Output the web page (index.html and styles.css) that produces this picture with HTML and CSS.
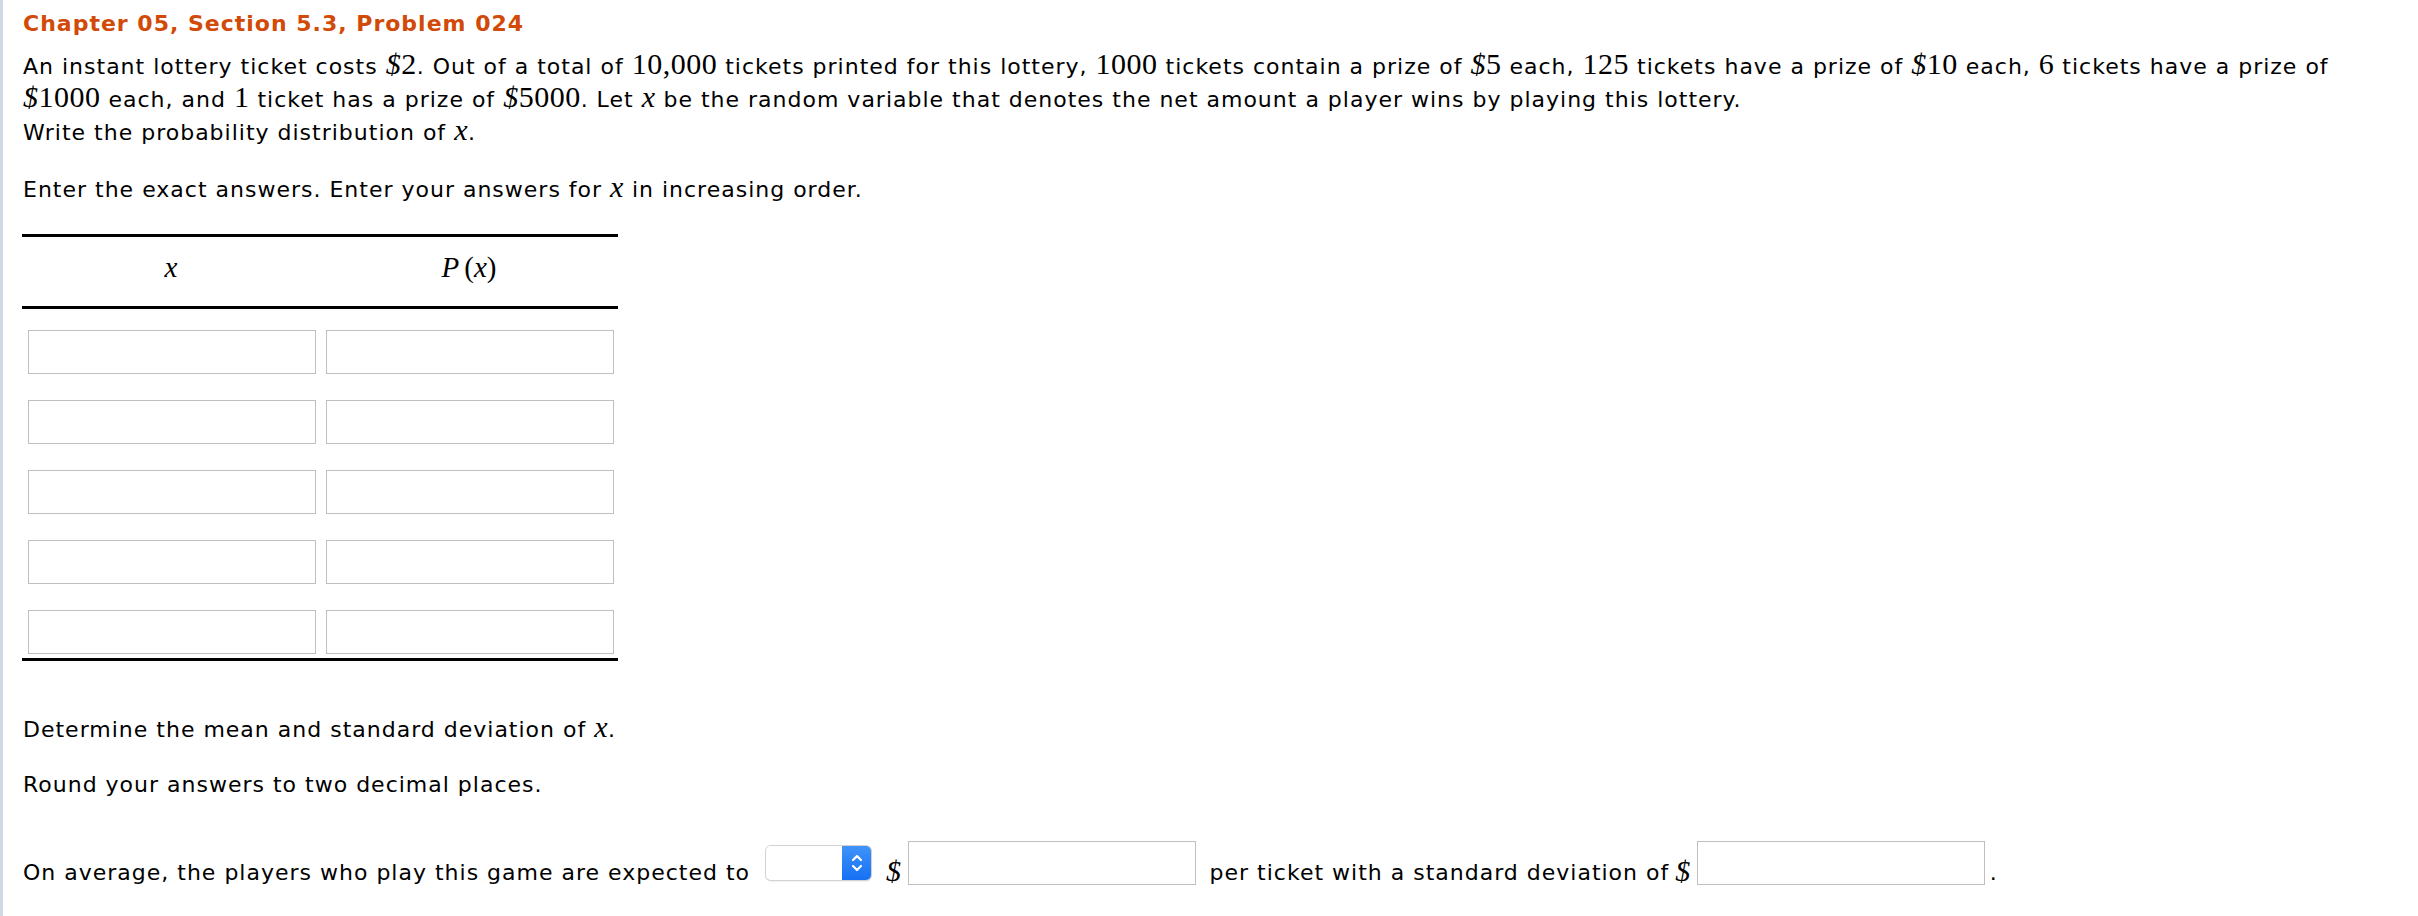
FILE: index.html
```html
<!DOCTYPE html>
<html lang="en">
<head>
<meta charset="utf-8">
<title>Chapter 05, Section 5.3, Problem 024</title>
<link rel="stylesheet" href="styles.css">
</head>
<body>
<div class="page">
  <h1 class="title">Chapter 05, Section 5.3, Problem 024</h1>
  <p class="para">An instant lottery ticket costs <span class="m"><i>$</i>2</span>. Out of a total of <span class="m">10,000</span> tickets printed for this lottery, <span class="m">1000</span> tickets contain a prize of <span class="m"><i>$</i>5</span> each, <span class="m">125</span> tickets have a prize of <span class="m"><i>$</i>10</span> each, <span class="m">6</span> tickets have a prize of <span class="m"><i>$</i>1000</span> each, and <span class="m">1</span> ticket has a prize of <span class="m"><i>$</i>5000</span>. Let <span class="m"><i>x</i></span> be the random variable that denotes the net amount a player wins by playing this lottery.<br>Write the probability distribution of <span class="m"><i>x</i></span>.</p>
  <p class="para para-enter">Enter the exact answers. Enter your answers for <span class="m"><i>x</i></span> in increasing order.</p>

  <div class="dist">
    <div class="dist-head">
      <div class="dist-hcell"><i>x</i></div>
      <div class="dist-hcell"><i>P</i><span class="gap"></span>(<i>x</i>)</div>
    </div>
    <div class="dist-body">
      <input class="box" type="text"><input class="box" type="text">
      <input class="box" type="text"><input class="box" type="text">
      <input class="box" type="text"><input class="box" type="text">
      <input class="box" type="text"><input class="box" type="text">
      <input class="box" type="text"><input class="box" type="text">
    </div>
  </div>

  <p class="para para-det">Determine the mean and standard deviation of <span class="m"><i>x</i></span>.</p>
  <p class="para para-round">Round your answers to two decimal places.</p>

  <div class="answer-row">
    <span class="txt">On average, the players who play this game are expected to</span>
    <span class="dropdown">
      <span class="dropdown-field"></span>
      <span class="dropdown-btn">
        <svg width="14" height="22" viewBox="0 0 14 22" fill="none" stroke="#fff" stroke-width="2.2" stroke-linecap="round" stroke-linejoin="round"><path d="M3 8 L7 4 L11 8"/><path d="M3 14 L7 18 L11 14"/></svg>
      </span>
    </span>
    <span class="m dollar"><i>$</i></span>
    <input class="box box-ans" type="text">
    <span class="txt txt-per">per ticket with a standard deviation of</span>
    <span class="m dollar dollar2"><i>$</i></span>
    <input class="box box-ans box-sd" type="text">
    <span class="txt txt-dot">.</span>
  </div>
</div>
</body>
</html>
```

FILE: styles.css
```css
html, body {
  margin: 0;
  padding: 0;
  background: #ffffff;
}

body {
  font-family: "DejaVu Sans", Verdana, sans-serif;
  font-size: 22px;
  letter-spacing: 1px;
  color: #000000;
}

.page {
  min-height: 916px;
  box-sizing: border-box;
  border-left: 3px solid #cfd8e3;
  padding: 11px 50px 0 20px;
}

.title {
  margin: 0;
  font-size: 22px;
  line-height: 26px;
  font-weight: bold;
  letter-spacing: 1px;
  color: #d24a08;
}

.para {
  margin: 12px 0 0 0;
  line-height: 30px;
}

.m {
  font-family: "Liberation Serif", "Times New Roman", serif;
  font-size: 30px;
  letter-spacing: 0.5px;
}

.m i {
  font-style: italic;
}

.para-enter {
  margin-top: 24px;
}

/* distribution table */
.dist {
  width: 596px;
  margin-top: 29px;
  margin-left: -1px;
}

.dist-head {
  display: grid;
  grid-template-columns: 298px 298px;
  height: 69px;
  border-top: 3px solid #000;
  border-bottom: 3px solid #000;
}

.dist-hcell {
  text-align: center;
  font-family: "Liberation Serif", "Times New Roman", serif;
  font-size: 29px;
  letter-spacing: 0;
  line-height: 61px;
}

.gap {
  display: inline-block;
  width: 5px;
}

.dist-body {
  display: grid;
  grid-template-columns: 298px 298px;
  row-gap: 26px;
  padding: 21px 0 4px 0;
  border-bottom: 3px solid #000;
}

.box {
  box-sizing: border-box;
  width: 288px;
  height: 44px;
  margin: 0 0 0 6px;
  padding: 0 6px;
  border: 1px solid #bfbfbf;
  border-radius: 0;
  background: #fff;
  font-family: "DejaVu Sans", Verdana, sans-serif;
  font-size: 21px;
  outline: none;
}

.para-det {
  margin-top: 51px;
}

.para-round {
  margin-top: 25px;
}

/* answer row */
.answer-row {
  display: flex;
  align-items: flex-end;
  margin-top: 41px;
  white-space: nowrap;
}

.txt {
  line-height: 30px;
}

.dropdown {
  display: flex;
  width: 105px;
  height: 34px;
  margin: 0 0 8px 16px;
  box-sizing: border-box;
  border-radius: 5px;
  overflow: hidden;
  box-shadow: 0 0 0 1px #d2d2d2, 0 1px 2px rgba(0, 0, 0, 0.18);
}

.dropdown-field {
  flex: 1;
  background: #fff;
}

.dropdown-btn {
  width: 29px;
  display: flex;
  align-items: center;
  justify-content: center;
  background: linear-gradient(#3f93fa, #1670f3);
}

.dropdown-btn svg {
  display: block;
}

.dollar {
  line-height: 30px;
  margin: 0 6px 2px 15px;
}

.box-ans {
  margin: 0 0 3px 0;
}

.txt-per {
  margin-left: 14px;
}

.dollar2 {
  margin-left: 6px;
}

.txt-dot {
  margin-left: 5px;
}
```
